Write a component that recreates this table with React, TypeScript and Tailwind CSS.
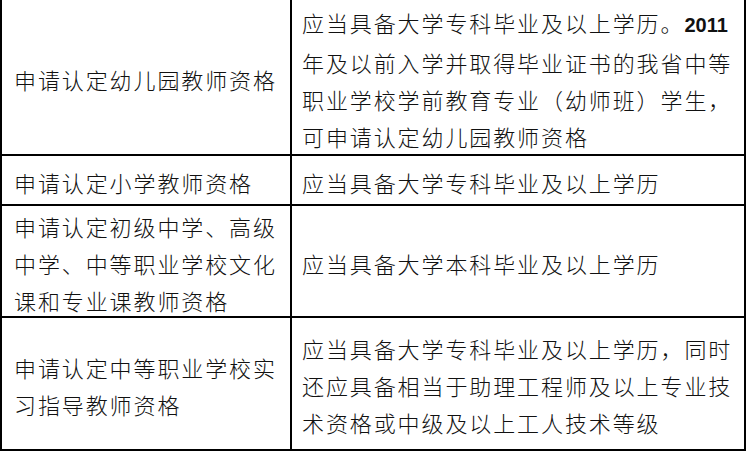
import React from 'react';

// 一行一个数组，保证换行位置与原表一致
interface Row {
  height: string;
  left: string[];
  right: React.ReactNode[];
}

const rows: Row[] = [
  {
    height: 'h-[156px]',
    left: ['申请认定幼儿园教师资格'],
    right: [
      <>
        应当具备大学专科毕业及以上学历。
        <span className="font-['Liberation_Sans',sans-serif] font-bold text-[20px] tracking-normal">2011</span>
      </>,
      '年及以前入学并取得毕业证书的我省中等',
      '职业学校学前教育专业（幼师班）学生，',
      '可申请认定幼儿园教师资格',
    ],
  },
  {
    height: 'h-[50px]',
    left: ['申请认定小学教师资格'],
    right: ['应当具备大学专科毕业及以上学历'],
  },
  {
    height: 'h-[112px]',
    left: ['申请认定初级中学、高级', '中学、中等职业学校文化', '课和专业课教师资格'],
    right: ['应当具备大学本科毕业及以上学历'],
  },
  {
    height: 'h-[133px]',
    left: ['申请认定中等职业学校实', '习指导教师资格'],
    right: [
      '应当具备大学专科毕业及以上学历，同时',
      '还应具备相当于助理工程师及以上专业技',
      '术资格或中级及以上工人技术等级',
    ],
  },
];

export default function App() {
  return (
    <div className="w-[746px] h-[451px] bg-white overflow-hidden font-['Noto_Sans_CJK_SC',sans-serif] font-light text-[22px] leading-[37px] tracking-[1.9px] text-[#111]">
      {rows.map((row, i) => (
        <div key={i} className={`flex ${row.height} border-b-2 border-black`}>
          <div className="w-[292px] shrink-0 flex items-center pl-[12px] pt-[4px] border-l-2 border-r-2 border-black">
            <div>
              {row.left.map((line, j) => (
                <div key={j} className="whitespace-nowrap">{line}</div>
              ))}
            </div>
          </div>
          <div className="flex-1 flex items-center pl-[10px] pt-[4px] border-r-2 border-black">
            <div>
              {row.right.map((line, j) => (
                <div key={j} className="whitespace-nowrap">{line}</div>
              ))}
            </div>
          </div>
        </div>
      ))}
    </div>
  );
}
